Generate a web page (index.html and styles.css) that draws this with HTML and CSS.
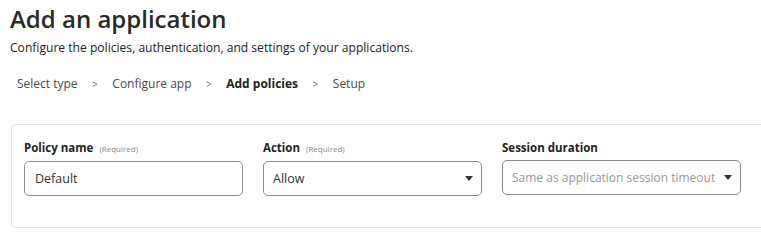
FILE: index.html
```html
<!DOCTYPE html>
<html lang="en">
<head>
  <meta charset="UTF-8" />
  <title>Add an application</title>
  <link rel="stylesheet" href="styles.css">
</head>
<body>
  <h1 class="page-title">Add an application</h1>
  <p class="page-hint">Configure the policies, authentication, and settings of your applications.</p>

  <nav class="steps">
    <span class="step">Select type</span>
    <span class="sep">&gt;</span>
    <span class="step">Configure app</span>
    <span class="sep">&gt;</span>
    <span class="step current">Add policies</span>
    <span class="sep">&gt;</span>
    <span class="step">Setup</span>
  </nav>

  <div class="card">
    <div class="field">
      <label class="field-label">Policy name <small>(Required)</small></label>
      <div class="input-box">Default</div>
    </div>
    <div class="field">
      <label class="field-label">Action <small>(Required)</small></label>
      <div class="input-box select">
        <span>Allow</span>
        <span class="caret"></span>
      </div>
    </div>
    <div class="field wide">
      <label class="field-label">Session duration</label>
      <div class="input-box select">
        <span class="placeholder">Same as application session timeout</span>
        <span class="caret"></span>
      </div>
    </div>
  </div>
</body>
</html>
```

FILE: styles.css
```css
body {
  margin: 0;
  padding: 0 0 0 10px;
  font-family: 'Open Sans', sans-serif;
  color: #313131;
  background: #fff;
  overflow: hidden;
  width: 800px;
}

.page-title {
  margin: 0;
  padding-top: 3px;
  font-size: 24px;
  font-weight: 600;
  line-height: 32px;
  color: #2a2a2a;
}

.page-hint {
  margin: 4px 0 0;
  font-size: 12.1px;
  line-height: 18px;
  color: #222;
}

.steps {
  display: flex;
  align-items: center;
  gap: 14.5px;
  margin: 18px 0 0 7px;
  font-size: 12px;
  line-height: 18px;
  color: #4a4a4a;
}

.steps .current {
  font-weight: 700;
  color: #222;
}

.steps .sep {
  font-size: 10px;
  color: #666;
}

.card {
  display: flex;
  gap: 20px;
  margin: 31px 0 0 1px;
  padding: 15px 12px 31px;
  width: 780px;
  border: 1px solid #e2e2e2;
  border-radius: 5px;
}

.field {
  flex: none;
  width: 219px;
  display: flex;
  flex-direction: column;
}

.field.wide {
  width: 239px;
}

.field-label {
  font-size: 11.5px;
  font-weight: 700;
  line-height: 16px;
  color: #222;
  margin-bottom: 4px;
}

.field-label small {
  font-size: 8px;
  font-weight: 400;
  color: #888;
  margin-left: 3px;
}

.input-box {
  box-sizing: border-box;
  height: 35px;
  padding: 0 10px;
  display: flex;
  align-items: center;
  border: 1px solid #8c8c8c;
  border-radius: 5px;
  font-size: 12.5px;
  color: #333;
}

.select {
  justify-content: space-between;
  padding: 0 8px 0 9px;
}

.placeholder {
  font-size: 12px;
  color: #999;
  white-space: nowrap;
  overflow: hidden;
}

.caret {
  flex: none;
  width: 0;
  height: 0;
  margin-left: 6px;
  border-left: 4px solid transparent;
  border-right: 4px solid transparent;
  border-top: 5px solid #333;
}
```
